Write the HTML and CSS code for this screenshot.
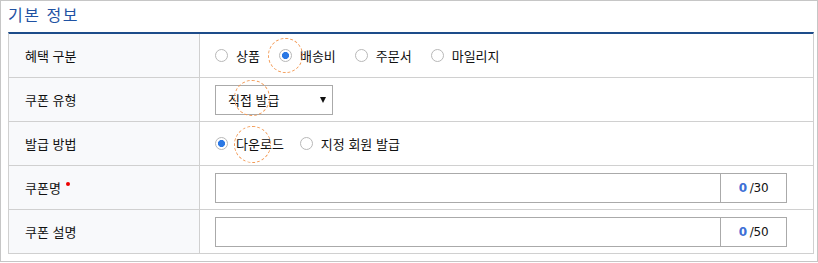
FILE: index.html
```html
<!DOCTYPE html>
<html lang="ko">
<head>
    <meta charset="UTF-8">
    <meta name="viewport" content="width=device-width, initial-scale=1.0">
    <title>쿠폰 등록 - 기본 정보</title>
    <link rel="stylesheet" href="styles.css">
</head>
<body>
    <div class="box">
        <h2 class="box-title">기본 정보</h2>

        <div class="form-table">
            <div class="form-row">
                <div class="form-label">혜택 구분</div>
                <div class="form-value">
                    <div class="radio-group wide">
                        <label class="option"><span class="radio"></span>상품</label>
                        <label class="option"><span class="radio checked"></span>배송비</label>
                        <label class="option"><span class="radio"></span>주문서</label>
                        <label class="option"><span class="radio"></span>마일리지</label>
                    </div>
                </div>
            </div>

            <div class="form-row">
                <div class="form-label">쿠폰 유형</div>
                <div class="form-value">
                    <div class="select">
                        <span>직접 발급</span>
                        <span class="select-arrow"></span>
                    </div>
                </div>
            </div>

            <div class="form-row">
                <div class="form-label">발급 방법</div>
                <div class="form-value">
                    <div class="radio-group">
                        <label class="option"><span class="radio checked"></span>다운로드</label>
                        <label class="option"><span class="radio"></span>지정 회원 발급</label>
                    </div>
                </div>
            </div>

            <div class="form-row">
                <div class="form-label">쿠폰명<span class="required"></span></div>
                <div class="form-value">
                    <div class="text-input">
                        <div class="input-field"></div>
                        <div class="counter"><b>0</b>/30</div>
                    </div>
                </div>
            </div>

            <div class="form-row">
                <div class="form-label">쿠폰 설명</div>
                <div class="form-value">
                    <div class="text-input">
                        <div class="input-field"></div>
                        <div class="counter"><b>0</b>/50</div>
                    </div>
                </div>
            </div>
        </div>

        <!-- guide markers -->
        <span class="marker marker-1"></span>
        <span class="marker marker-2"></span>
        <span class="marker marker-3"></span>
    </div>
</body>
</html>
```

FILE: styles.css
```css
body {
    margin: 0;
    font-family: "Noto Sans CJK KR", "Noto Sans", sans-serif;
    color: #111;
    background-color: #fff;
}
.box {
    position: relative;
    width: 818px;
    height: 262px;
    box-sizing: border-box;
    border: 1px solid #c6c6c6;
    padding: 0 3px 0 7px;
}
.box-title {
    margin: 0;
    height: 31px;
    line-height: 27px;
    font-size: 16px;
    font-weight: normal;
    letter-spacing: 1.5px;
    color: #1f52a3;
}
.form-table {
    width: 806px;
    box-sizing: border-box;
    border-top: 2px solid #1d4c8a;
    border-left: 1px solid #d0d0d0;
    border-right: 1px solid #d0d0d0;
}
.form-row {
    display: grid;
    grid-template-columns: 191px 1fr;
    height: 44px;
    box-sizing: border-box;
    border-bottom: 1px solid #d0d0d0;
}
.form-label {
    display: flex;
    align-items: center;
    padding-left: 16px;
    background-color: #f8f9fb;
    border-right: 1px solid #d0d0d0;
    font-size: 13px;
}
.form-value {
    display: flex;
    align-items: center;
    padding-left: 15px;
    font-size: 13px;
}
.required {
    display: inline-block;
    width: 4px;
    height: 4px;
    margin-left: 5px;
    border-radius: 50%;
    background-color: #e00;
    align-self: flex-start;
    margin-top: 16px;
}
.radio-group {
    display: flex;
    align-items: center;
}
.option {
    display: flex;
    align-items: center;
    gap: 8px;
    margin-right: 16px;
}
.radio-group.wide .option {
    margin-right: 19px;
}
.radio {
    width: 13px;
    height: 13px;
    box-sizing: border-box;
    border: 1px solid #b8b8b8;
    border-radius: 50%;
    background-color: #fff;
}
.radio.checked {
    background: radial-gradient(circle, #2b78e4 0, #2b78e4 3.3px, #fff 3.8px);
}
.select {
    display: flex;
    align-items: center;
    justify-content: space-between;
    width: 118px;
    height: 30px;
    box-sizing: border-box;
    border: 1px solid #aaa;
    padding: 0 6px 0 12px;
}
.select-arrow {
    width: 0;
    height: 0;
    border-left: 3.5px solid transparent;
    border-right: 3.5px solid transparent;
    border-top: 6px solid #111;
    margin-top: 1px;
}
.text-input {
    display: flex;
    width: 572px;
    height: 30px;
    box-sizing: border-box;
    border: 1px solid #aaa;
}
.input-field {
    flex: 1;
}
.counter {
    display: flex;
    align-items: center;
    justify-content: center;
    width: 65px;
    border-left: 1px solid #aaa;
    font-family: "DejaVu Sans", sans-serif;
    font-size: 12px;
    letter-spacing: -0.3px;
}
.counter b {
    color: #3d6fd6;
    margin-right: 3px;
}
.marker {
    position: absolute;
    width: 35px;
    height: 35px;
    box-sizing: border-box;
    border: 1px dashed #f39b57;
    border-radius: 50%;
}
.marker-1 {
    left: 267px;
    top: 37px;
}
.marker-2 {
    left: 233px;
    top: 79px;
    width: 36px;
    height: 36px;
}
.marker-3 {
    left: 233px;
    top: 125px;
    width: 37px;
    height: 37px;
}
```
